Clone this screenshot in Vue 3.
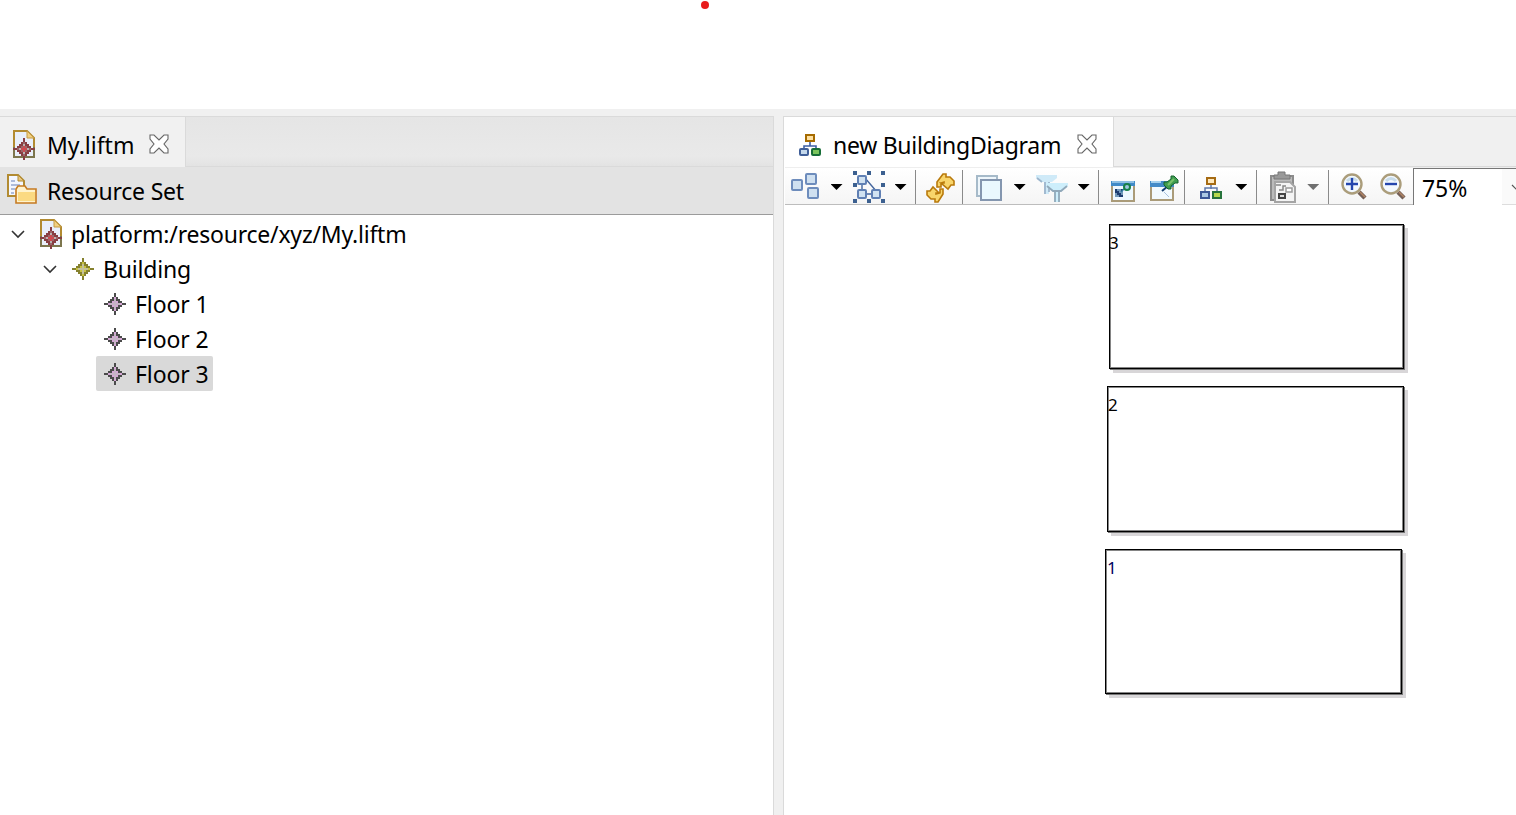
<script setup>
// Eleven-by-eleven cell map shared by every model element marker.
const starMap = [
  '.....d.....', '.....d.....', '....dpd....', '...ddgdd...', '..ddpgpdd..',
  'ddpgggggpdd', '..ddpgpdd..', '...ddgdd...', '....dpd....', '.....d.....', '.....d.....'
]
const cells = starMap.flatMap((row, y) =>
  [...row].map((kind, x) => ({ kind, x: x * 2, y: y * 2 })).filter(c => c.kind !== '.')
)
const floors = ['Floor 1', 'Floor 2', 'Floor 3']
const closePath = 'M1 1h4l5 5 5-5h4v4l-4 5 4 5v4h-4l-5-5-5 5H1v-4l4-5-4-5z'
</script>

<template>
  <div class="screen">
    <div class="blank"><i class="dot"></i></div>
    <div class="workbench">
      <section class="pane left">
        <div class="tabs">
          <div class="tab ltab">
            <svg class="file" width="24" height="31" viewBox="0 0 24 31">
              <path d="M2 1h13l7 7v19H2z" fill="#e9effa" stroke="#b28b32" stroke-width="2" />
              <path d="M15 1v7h7z" fill="#f1d082" stroke="#c79c42" />
              <path d="M2 17v10h20V17" fill="none" stroke="#7d764d" stroke-width="2" />
              <g transform="translate(1 8)" class="star red" shape-rendering="crispEdges">
                <rect v-for="(c, i) in cells" :key="i" :x="c.x" :y="c.y" width="2" height="2" :class="c.kind" />
                <path class="core" d="M10 8h2v2h2v2h-2v2h-2v-2H8v-2h2z" />
              </g>
            </svg>
            <span class="t1">My.liftm</span>
            <svg class="close" width="20" height="20" viewBox="0 0 20 20"><path :d="closePath" fill="#fff" stroke="#666" stroke-width="1.1" /></svg>
          </div>
          <div class="tabrest"></div>
        </div>
        <div class="resource">
          <svg width="30" height="30" viewBox="0 0 30 30">
            <path d="M1 1h10l6 6v15H1z" fill="#f4f7ff" stroke="#b28b32" stroke-width="2" />
            <path d="M11 1v6h6z" fill="#e9c780" stroke="#b28b32" />
            <path d="M4 7h4m-4 4h9m-9 4h4m-4 4h3" stroke="#96a9d1" stroke-width="1.6" />
            <path d="M9 29V15l2-3h7l2 3h9v14z" fill="#fff3cc" stroke="#c67b22" stroke-width="1.6" />
            <path d="M11 18h17v9H11z" fill="#fbda82" />
          </svg>
          <span>Resource Set</span>
        </div>
        <div class="tree">
          <div class="row r0">
            <svg class="chev" width="14" height="9" viewBox="0 0 14 9"><path d="M1 1l6 6 6-6" /></svg>
            <svg class="file" width="24" height="31" viewBox="0 0 24 31">
              <path d="M2 1h13l7 7v19H2z" fill="#e9effa" stroke="#b28b32" stroke-width="2" />
              <path d="M15 1v7h7z" fill="#f1d082" stroke="#c79c42" />
              <path d="M2 17v10h20V17" fill="none" stroke="#7d764d" stroke-width="2" />
              <g transform="translate(1 8)" class="star red" shape-rendering="crispEdges">
                <rect v-for="(c, i) in cells" :key="i" :x="c.x" :y="c.y" width="2" height="2" :class="c.kind" />
                <path class="core" d="M10 8h2v2h2v2h-2v2h-2v-2H8v-2h2z" />
              </g>
            </svg>
            <span>platform:/resource/xyz/My.liftm</span>
          </div>
          <div class="row r1">
            <svg class="chev" width="14" height="9" viewBox="0 0 14 9"><path d="M1 1l6 6 6-6" /></svg>
            <svg class="star olive" width="22" height="22" shape-rendering="crispEdges">
              <rect v-for="(c, i) in cells" :key="i" :x="c.x" :y="c.y" width="2" height="2" :class="c.kind" />
            </svg>
            <span>Building</span>
          </div>
          <div v-for="(floor, n) in floors" :key="floor" class="row r2" :class="{ selected: n === 2 }">
            <svg class="star pink" width="22" height="22" shape-rendering="crispEdges">
              <rect v-for="(c, i) in cells" :key="i" :x="c.x" :y="c.y" width="2" height="2" :class="c.kind" />
            </svg>
            <span>{{ floor }}</span>
          </div>
        </div>
      </section>

      <section class="pane right">
        <div class="tabs">
          <div class="tab rtab">
            <svg class="org" width="22" height="22" viewBox="0 0 22 22">
              <path d="M11 8v4M5 15v-3h12v3" fill="none" stroke="#3d5fa5" stroke-width="1.6" />
              <rect x="7" y="1" width="8" height="6" fill="#ffe0a0" stroke="#a66b00" stroke-width="2" />
              <rect x="1" y="15" width="8" height="6" rx="1" fill="#c4d8ec" stroke="#405f99" stroke-width="2" />
              <rect x="13" y="15" width="8" height="6" rx="1" fill="#7bc45c" stroke="#176d37" stroke-width="2" />
            </svg>
            <span class="t2">new BuildingDiagram</span>
            <svg class="close" width="20" height="20" viewBox="0 0 20 20"><path :d="closePath" fill="#fff" stroke="#666" stroke-width="1.1" /></svg>
          </div>
          <div class="tabrest"></div>
        </div>
        <div class="toolbar">
          <div class="group g1">
            <svg width="28" height="26" viewBox="0 0 28 26" fill="#cfe0f0" stroke="#6d8cbc" stroke-width="2">
              <rect x="1" y="7" width="10" height="10" rx="1" /><rect x="15" y="1" width="10" height="10" rx="1" /><rect x="17" y="15" width="10" height="10" rx="1" />
            </svg>
            <i class="arrow a1"></i>
            <svg class="arrange" width="32" height="32" viewBox="0 0 32 32">
              <path d="M9 9v14h14M12 7l12 14" fill="none" stroke="#44669d" stroke-width="1.4" />
              <g fill="#d1e2f1" stroke="#6080b4" stroke-width="2"><rect x="5" y="5" width="8" height="8" rx="1" /><rect x="5" y="19" width="8" height="8" rx="1" /><rect x="19" y="19" width="8" height="8" rx="1" /></g>
              <path d="M0 0h4v4H0zM14 0h4v4h-4zM28 0h4v4h-4zM0 12h4v4H0zM28 12h4v4h-4zM0 28h4v4H0zM14 28h4v4h-4zM28 28h4v4h-4z" fill="#3c6090" />
            </svg>
            <i class="arrow a2"></i>
          </div>
          <div class="group g2">
            <svg width="30" height="30" viewBox="0 0 30 30" fill="#f8d56b" stroke="#b97a0c" stroke-width="1.6">
              <path d="M11 9l6-8h3v3h4l4 4v4h-3l-3 4-7-6h3v-1l-3 1v4h-4z" />
              <path d="M17 21l-5 8h-3v-3H5l-4-4v-4h3l3-4 6 6h-3v1l4-1v-4h3z" />
            </svg>
          </div>
          <div class="group g3">
            <svg width="27" height="27" viewBox="0 0 27 27">
              <path d="M1 21V1h20v20z" fill="#eef6fb" stroke="#a6bac9" stroke-width="2" />
              <rect x="5" y="5" width="20" height="20" fill="#eaf8fe" stroke="#8496af" stroke-width="2" />
            </svg>
            <i class="arrow a3"></i>
            <svg class="filter" width="32" height="28" viewBox="0 0 32 28">
              <path d="M0 1h21v3l-5 4h-3v12H8V8H5L0 4z" fill="#cfeaf8" /><path d="M1 4l5 4M9 8v12M13 8v10" fill="none" stroke="#9db5cc" stroke-width="1.8" />
              <path d="M10 9h22v3l-6 5h-2v11h-6V17h-2l-6-5z" fill="#cdeefb" /><path d="M11 12l6 5h8l6-5M19 17v11M23 17v11" fill="none" stroke="#91a9ba" stroke-width="1.8" />
            </svg>
            <i class="arrow a4"></i>
          </div>
          <div class="group g4">
            <svg width="24" height="22" viewBox="0 0 24 22">
              <rect x="1" y="2" width="22" height="19" fill="#eef8ff" stroke="#aa9b79" stroke-width="2" /><path d="M0 1h24v5H0z" fill="#408ac7" />
              <path d="M1 2h22" stroke="#a7d0ec" stroke-width="1.5" /><path d="M4 9h8v8H4z" fill="#7198ba" /><path d="M4 9h2v2h2v2h2v2h2v2h-4v-2H6v-2H4zM10 9h2v2h-2z" fill="#1c3c70" />
              <path d="M10 12l4-4" stroke="#337ca5" stroke-width="1.5" /><circle cx="16" cy="7" r="3" fill="#9dc5df" stroke="#168048" stroke-width="2" />
            </svg>
            <svg class="pin" width="29" height="27" viewBox="0 0 29 27">
              <rect x="1" y="8" width="22" height="17" fill="#f2faff" stroke="#aa9b79" stroke-width="2" /><path d="M0 6h24v6H0z" fill="#438bc8" />
              <path d="M1 7h10" stroke="#a5d1ee" stroke-width="2" /><path d="M12 16l6-5" stroke="#133d70" stroke-width="2" /><path d="M14 17l5 5" stroke="#a7c2df" />
              <path d="M14 7h3l4-3V1h3l4 4v3h-3l-4 3v3h-3l-4-4z" fill="#419e50" stroke="#17632e" /><path d="M18 10l6-6" stroke="#7bc36b" stroke-width="2" />
            </svg>
          </div>
          <div class="group g5">
            <svg width="22" height="22" viewBox="0 0 22 22" stroke-width="2">
              <path d="M11 8v4M5 15v-4h12v4" fill="none" stroke="#6079a9" stroke-width="1.5" />
              <rect x="7" y="1" width="8" height="6" fill="#ffe9bd" stroke="#a66b13" /><rect x="1" y="15" width="8" height="6" fill="#acc8e4" stroke="#3c5797" /><rect x="13" y="15" width="8" height="6" fill="#b7d94d" stroke="#27733b" />
            </svg>
            <i class="arrow a5"></i>
          </div>
          <div class="group g6">
            <svg width="27" height="32" viewBox="0 0 27 32">
              <rect x="1" y="5" width="22" height="24" fill="#bbb" stroke="#8c8c8c" stroke-width="2" /><path d="M4 8V4h4V1h7v3h5v4z" fill="#999" stroke="#777" />
              <path d="M5 11h15l5 5v15H5z" fill="#f4f4f4" stroke="#a5a5a5" stroke-width="2" /><path d="M6 14h5m-2 5h4v-4h3" fill="none" stroke="#888" stroke-width="1.5" />
              <rect x="16" y="17" width="6" height="4" fill="#fff" stroke="#999" stroke-width="1.5" /><rect x="9" y="23" width="6" height="4" fill="#ddd" stroke="#444" stroke-width="2" />
            </svg>
            <i class="arrow a6"></i>
          </div>
          <div class="group g7">
            <svg v-for="sign in ['plus', 'minus']" :key="sign" width="26" height="27" viewBox="0 0 26 27">
              <path d="M18 19l6 6" stroke="#735f56" stroke-width="4.5" /><path d="M19 19l5 5" stroke="#b18463" stroke-width="1.5" />
              <circle cx="11" cy="11" r="9.5" fill="#f3f9ff" stroke="#ab9d7b" stroke-width="2.4" />
              <path d="M6 8q5-5 10 0" fill="none" stroke="#c8dcea" stroke-width="3" />
              <path :d="sign === 'plus' ? 'M5 11h12M11 5v12' : 'M5 11h12'" stroke="#2446ae" stroke-width="2.4" />
            </svg>
          </div>
          <div class="zoomfield">
            <span>75%</span><div class="pick"><svg width="12" height="8" viewBox="0 0 12 8"><path d="M1 1l5 5 5-5" fill="none" stroke="#555" stroke-width="1.2" /></svg></div>
          </div>
        </div>
        <div class="canvas">
          <div class="node n3"><span>3</span></div>
          <div class="node n2"><span>2</span></div>
          <div class="node n1"><span>1</span></div>
        </div>
      </section>
    </div>
  </div>
</template>

<style>
body { overflow: hidden; background: #fff; }
</style>
<style scoped>
.screen { width: 1516px; height: 815px; overflow: hidden; display: flex; flex-direction: column; font-family: "Noto Sans", "Open Sans", sans-serif; font-size: 23px; color: #000; }
.screen * { box-sizing: border-box; }
svg { display: block; flex: none; }
span { white-space: nowrap; }
.blank { height: 109px; flex: none; position: relative; }
.dot { position: absolute; left: 701px; top: 1px; width: 8px; height: 8px; border-radius: 50%; background: #e81c1c; }
.workbench { flex: 1; background: #f0f0f0; padding-top: 7px; display: flex; gap: 9px; }
.pane { border-top: 1px solid #dadada; height: 699px; display: flex; flex-direction: column; background: #fff; }
.left { width: 774px; border-right: 1px solid #dadada; }
.right { width: 733px; border-left: 1px solid #dadada; overflow: hidden; }
.tabs { height: 50px; flex: none; display: flex; }
.tab { display: flex; align-items: flex-start; height: 50px; border-right: 1px solid #dadada; }
.ltab { width: 186px; background: #f1f1f1; }
.rtab { width: 330px; background: #fff; }
.tabrest { flex: 1; border-bottom: 1px solid #dadada; background: linear-gradient(#e5e5e5, #e9e9e9 80%, #e3e3e3); }
.right .tabrest { background: #f0f0f0; }
.ltab .file { margin: 13px 0 0 12px; }
.t1 { width: 86px; margin: 12px 0 0 11px; line-height: 32px; }
.close { margin-top: 17px; }
.ltab .close { margin-left: 15.5px; }
.org { margin: 17px 0 0 15px; }
.t2 { width: 227px; margin: 12px 0 0 12px; line-height: 32px; letter-spacing: -.28px; }
.rtab .close { margin-left: 16.5px; }
.resource { height: 48px; flex: none; background: #e3e3e3; border-bottom: 1px solid #9b9b9b; display: flex; align-items: flex-start; padding: 7px 0 0 7px; }
.resource span { margin: 1px 0 0 10px; line-height: 32px; letter-spacing: -.2px; }
.tree { padding-top: 1px; }
.row { display: flex; align-items: center; height: 35px; }
.row span { line-height: 32px; }
.chev { position: relative; top: 1px; }
.r0 { padding-left: 11px; } .r0 .file { margin: 2px 0 0 14px; } .r0 span { margin-left: 8px; letter-spacing: -.22px; }
.r1 { padding-left: 43px; } .r1 svg + svg { margin-left: 15px; } .r1 span { margin-left: 9px; letter-spacing: -.2px; }
.r2 { margin-left: 96px; width: 117px; padding-left: 8px; border-radius: 2px; } .r2 span { margin-left: 9px; letter-spacing: -.1px; }
.selected { background: #d9d9d9; }
.chev path { fill: none; stroke: #333; stroke-width: 1.6; }
.star .d { fill: #4b4b4b; } .star .p { fill: #d7a7d7; } .star .g { fill: #c6b4c6; }
.olive .d { fill: #85812e; } .olive .p { fill: #c8c23f; } .olive .g { fill: #c4c19a; }
.red .d { fill: #883e42; } .red .p { fill: #9c6668; } .red .g { fill: #b9b3b3; } .core { fill: #cf4a50; }
.toolbar { height: 38px; flex: none; display: flex; padding-top: 2px; margin-left: 1px; border-bottom: 1px solid #bdbdbd; background: linear-gradient(#fff, #f5f5f5); border-top: 1px solid #eee; }
.group { display: flex; align-items: flex-start; border-right: 1px solid #8a8a8a; height: 34px; }
.arrow { flex: none; width: 12px; height: 6px; background: #000; clip-path: polygon(0 0, 100% 0, 50% 100%); margin-top: 14px; }
.g1 { width: 131px; padding-left: 6px; } .g1 > svg:first-child { margin-top: 3px; } .a1 { margin-left: 11.5px; } .arrange { margin: 1px 0 0 10.5px; } .a2 { margin-left: 9.5px; }
.g2 { width: 47px; padding: 3px 0 0 10px; }
.g3 { width: 137px; padding-left: 13px; } .g3 > svg:first-child { margin-top: 5px; } .a3 { margin-left: 11px; } .filter { margin: 4px 0 0 10px; } .a4 { margin-left: 10px; }
.g4 { width: 86px; padding-left: 12px; } .g4 svg:first-child { margin-top: 10px; } .pin { margin: 5px 0 0 15px; }
.g5 { width: 72px; padding-left: 15px; } .g5 svg { margin-top: 7px; } .a5 { margin-left: 13px; }
.g6 { width: 72px; padding-left: 13px; } .g6 svg { margin-top: 1px; } .a6 { margin-left: 10px; background: #707070; }
.g7 { width: 84px; padding: 3px 0 0 12px; gap: 13px; border: 0; }
.zoomfield { width: 103px; height: 38px; margin-top: -2px; border-left: 1px solid #777; border-top: 1px solid #777; background: #fff; display: flex; flex: none; }
.zoomfield span { width: 89px; padding-left: 8px; line-height: 38px; }
.pick { width: 14px; height: 36px; background: #fafafa; border-bottom: 1px solid #ddd; padding: 15px 0 0 9px; overflow: hidden; }
.canvas { flex: 1; position: relative; background: #fff; }
.node { position: absolute; width: 297px; height: 146px; background: #fff; border: 1px solid #000; box-shadow: inset 0 0 0 1px #858585, 1px 1px 0 #777, 4px 4px 0 #d8d6d8; font-size: 17px; }
.node span { position: absolute; left: -1px; top: 6px; line-height: 24px; }
.n3 { left: 325px; top: 19px; width: 295px; height: 145px; } .n2 { left: 323px; top: 181px; } .n1 { left: 321px; top: 344px; height: 145px; }
.n2 span { left: 0; } .n1 span { left: 1px; color: #000060; }
</style>
